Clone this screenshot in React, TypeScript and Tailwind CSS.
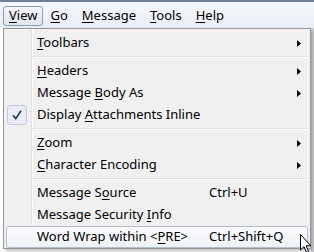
import type { ReactNode } from 'react';

type Item =
  | { kind: 'sep' }
  | {
      kind: 'item';
      label: ReactNode;
      shortcut?: string;
      submenu?: boolean;
      checked?: boolean;
      hot?: boolean;
    };

// underlined access key
const K = ({ children }: { children: ReactNode }) => (
  <span className="underline decoration-1 underline-offset-[2px]">{children}</span>
);

const items: Item[] = [
  { kind: 'item', label: <><K>T</K>oolbars</>, submenu: true },
  { kind: 'sep' },
  { kind: 'item', label: <><K>H</K>eaders</>, submenu: true },
  { kind: 'item', label: <>Message <K>B</K>ody As</>, submenu: true },
  { kind: 'item', label: <>Display <K>A</K>ttachments Inline</>, checked: true },
  { kind: 'sep' },
  { kind: 'item', label: <><K>Z</K>oom</>, submenu: true },
  { kind: 'item', label: <><K>C</K>haracter Encoding</>, submenu: true },
  { kind: 'sep' },
  { kind: 'item', label: <>Message S<K>o</K>urce</>, shortcut: 'Ctrl+U' },
  { kind: 'item', label: <>Message Security <K>I</K>nfo</> },
  { kind: 'item', label: <>Word Wrap within &lt;<K>P</K>RE&gt;</>, shortcut: 'Ctrl+Shift+Q', hot: true },
];

const topMenus: { key: string; rest: string; open?: boolean }[] = [
  { key: 'V', rest: 'iew', open: true },
  { key: 'G', rest: 'o' },
  { key: 'M', rest: 'essage' },
  { key: 'T', rest: 'ools' },
  { key: 'H', rest: 'elp' },
];

function Arrow() {
  return (
    <svg width="4" height="7" viewBox="0 0 4 7">
      <path d="M0 0 L4 3.5 L0 7 Z" fill="#000" />
    </svg>
  );
}

function Check() {
  return (
    <div className="w-[20px] h-[20px] rounded-[3px] border border-[#c3cad6] bg-[#e9edf3] flex items-center justify-center">
      <svg width="10" height="10" viewBox="0 0 10 10">
        <path d="M1 5.2 L3.8 8.6 L9 0.8" fill="none" stroke="#1f3568" strokeWidth="1.6" />
      </svg>
    </div>
  );
}

export default function App() {
  return (
    <div
      className="relative w-[314px] h-[252px] overflow-hidden bg-white flex flex-col text-[13px] text-black"
      style={{ fontFamily: '"Noto Sans", "Segoe UI", sans-serif' }}
    >
      {/* menu bar */}
      <div className="h-[28px] flex-shrink-0 border-t-2 border-[#6d8199] bg-gradient-to-b from-[#f4f7fb] to-[#e9eef5] flex items-center pl-[3px] pt-[2px]">
        {topMenus.map(m => (
          <div
            key={m.key}
            className={
              m.open
                ? 'h-[20px] px-[5px] flex items-center rounded-[3px] border border-[#8e9aab] bg-gradient-to-b from-[#f4f6f9] to-[#e3e8ef]'
                : 'h-[20px] px-[6px] flex items-center border border-transparent'
            }
          >
            <span>
              <K>{m.key}</K>
              {m.rest}
            </span>
          </div>
        ))}
      </div>

      {/* window content behind the menu */}
      <div className="flex-1 flex">
        <div className="flex-1 bg-white" />
        <div className="w-[3px] bg-[#d2d5da]" />
      </div>

      {/* dropdown */}
      <div className="absolute left-[3px] top-[28px] w-[308px] border border-[#979797] bg-[#f0f0f0] pt-[3px] shadow-[2px_2px_3px_rgba(0,0,0,0.25)]">
        <div className="absolute left-[27px] top-0 bottom-0 w-[1px] bg-[#e2e3e3]" />
        <div className="absolute left-[28px] top-0 bottom-0 w-[1px] bg-white" />
        {items.map((it, i) =>
          it.kind === 'sep' ? (
            <div key={i} className="relative h-[6px] pt-[2px] ml-[28px] mr-[2px]">
              <div className="h-[1px] bg-[#e0e0e0]" />
              <div className="h-[1px] bg-white" />
            </div>
          ) : (
            <div
              key={i}
              className={
                it.hot
                  ? 'relative h-[22px] mx-[2px] flex items-center rounded-[3px] border border-[#b5bfcc] bg-gradient-to-b from-[#fbfcfd] to-[#eef1f5]'
                  : 'relative h-[22px] mx-[2px] flex items-center border border-transparent'
              }
            >
              <div className="w-[24px] h-full flex items-center">{it.checked && <Check />}</div>
              <div className="w-[178px] pl-[6px] whitespace-nowrap">{it.label}</div>
              <div className="flex-1 whitespace-nowrap">{it.shortcut}</div>
              <div className="w-[14px] pl-[4px] flex items-center">{it.submenu && <Arrow />}</div>
            </div>
          )
        )}
      </div>

      {/* mouse pointer */}
      <svg className="absolute left-[300px] top-[234px]" width="12" height="19" viewBox="0 0 12 19">
        <path d="M0.5 0.5 L0.5 16 L4 12.6 L6.6 18.4 L8.6 17.5 L6.1 11.8 L10.8 11.8 Z" fill="#fff" stroke="#000" strokeWidth="1" />
      </svg>
    </div>
  );
}
